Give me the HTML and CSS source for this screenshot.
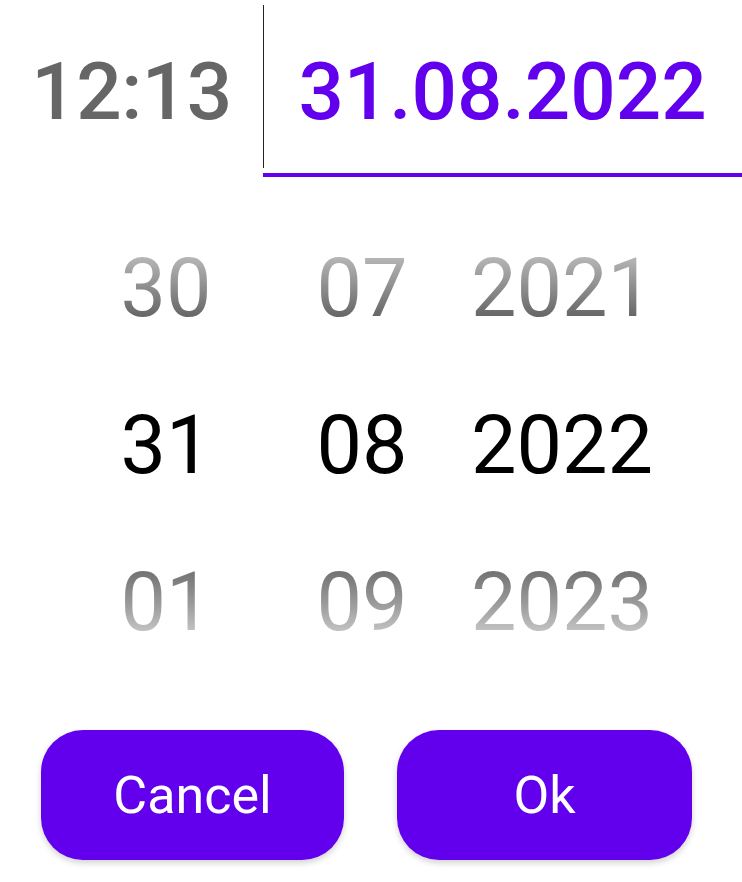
FILE: index.html
```html
<!DOCTYPE html>
<html>
<head>
<meta charset="utf-8">
<link rel="stylesheet" href="styles.css">
</head>
<body>
<div class="picker">
  <div class="header">
    <div class="time">12:13</div>
    <div class="divider"></div>
    <div class="date">31.08.2022</div>
  </div>
  <div class="wheel">
    <div class="col">
      <div class="item faded-top">30</div>
      <div class="item selected">31</div>
      <div class="item faded-bottom">01</div>
    </div>
    <div class="col">
      <div class="item faded-top">07</div>
      <div class="item selected">08</div>
      <div class="item faded-bottom">09</div>
    </div>
    <div class="col col-year">
      <div class="item faded-top">2021</div>
      <div class="item selected">2022</div>
      <div class="item faded-bottom">2023</div>
    </div>
  </div>
  <div class="actions">
    <button class="btn btn-cancel">Cancel</button>
    <button class="btn btn-ok">Ok</button>
  </div>
</div>
</body>
</html>
```

FILE: styles.css
```css
html, body {
  margin: 0;
  padding: 0;
  background: #ffffff;
}
body {
  font-family: Roboto, "Noto Sans", sans-serif;
  width: 742px;
  height: 882px;
  overflow: hidden;
}
.header {
  display: flex;
  height: 177px;
}
.time {
  width: 263px;
  padding-top: 52px;
  box-sizing: border-box;
  font-size: 80px;
  line-height: 80px;
  font-weight: 500;
  color: #666666;
  text-align: center;
  letter-spacing: -0.5px;
}
.divider {
  width: 1px;
  margin-top: 5px;
  height: 163px;
  background: #222222;
}
.date {
  flex: 1;
  padding-top: 52px;
  box-sizing: border-box;
  font-size: 80px;
  line-height: 80px;
  font-weight: 500;
  color: #6200ee;
  text-align: center;
  border-bottom: 4px solid #6200ee;
  margin-left: -1px;
}
.wheel {
  display: grid;
  grid-template-columns: 196px 196px 204px;
  margin-top: 33px;
  margin-left: 68px;
}
.col {
  display: flex;
  flex-direction: column;
}
.item {
  font-size: 81px;
  line-height: 157px;
  height: 157px;
  text-align: center;
  color: #000000;
}
.faded-top {
  background: linear-gradient(to bottom, #b4b4b4 0%, #b4b4b4 31%, #8c8c8c 50%, #666666 68%, #666666 100%);
  -webkit-background-clip: text;
  background-clip: text;
  color: transparent;
}
.faded-bottom {
  background: linear-gradient(to bottom, #747474 0%, #747474 31%, #999999 50%, #c2c2c2 68%, #c2c2c2 100%);
  -webkit-background-clip: text;
  background-clip: text;
  color: transparent;
}
.actions {
  display: flex;
  margin-top: 49px;
  padding-left: 41px;
  gap: 53px;
}
.btn {
  height: 130px;
  border: none;
  border-radius: 42px;
  background: #6200ee;
  color: #ffffff;
  font-family: Roboto, "Noto Sans", sans-serif;
  font-size: 52px;
  font-weight: 400;
  padding: 0;
  box-shadow: 0 3px 6px rgba(0, 0, 0, 0.18);
}
.btn-cancel {
  width: 303px;
}
.btn-ok {
  width: 295px;
}
```
